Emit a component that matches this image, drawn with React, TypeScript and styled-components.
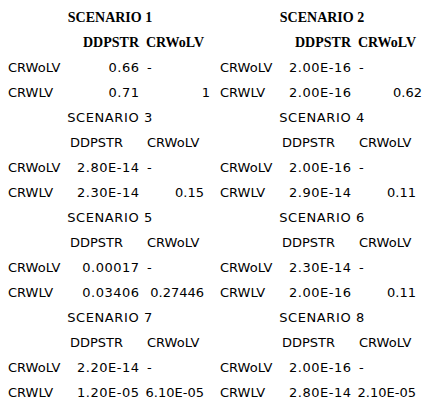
import React from 'react';
import styled, { createGlobalStyle } from 'styled-components';

interface IScenario {
  n: number;
  strong?: boolean;
  rows: [string, string, string][];
}

interface IStrong {
  strong?: boolean;
}

interface IValue {
  col: 'b' | 'c';
  edge?: boolean;
}

const scenarios: IScenario[] = [
  { n: 1, strong: true, rows: [['CRWoLV', '0.66', '-'], ['CRWLV', '0.71', '1']] },
  { n: 2, strong: true, rows: [['CRWoLV', '2.00E-16', '-'], ['CRWLV', '2.00E-16', '0.62']] },
  { n: 3, rows: [['CRWoLV', '2.80E-14', '-'], ['CRWLV', '2.30E-14', '0.15']] },
  { n: 4, rows: [['CRWoLV', '2.00E-16', '-'], ['CRWLV', '2.90E-14', '0.11']] },
  { n: 5, rows: [['CRWoLV', '0.00017', '-'], ['CRWLV', '0.03406', '0.27446']] },
  { n: 6, rows: [['CRWoLV', '2.30E-14', '-'], ['CRWLV', '2.00E-16', '0.11']] },
  { n: 7, rows: [['CRWoLV', '2.20E-14', '-'], ['CRWLV', '1.20E-05', '6.10E-05']] },
  { n: 8, rows: [['CRWoLV', '2.00E-16', '-'], ['CRWLV', '2.80E-14', '2.10E-05']] },
];

const GlobalStyle = createGlobalStyle`
  body {
    margin: 0;
    background: #fff;
    color: #000;
    font-family: 'DejaVu Sans', sans-serif;
    font-size: 13px;
  }
`;

const Page = styled.div`
  display: grid;
  grid-template-columns: 204px 204px;
  column-gap: 8px;
  padding: 5px 0 0 8px;
`;

const Block = styled.div`
  display: grid;
  grid-template-columns: 62px 70px 72px;
  grid-auto-rows: 25px;
  line-height: 25px;
  white-space: nowrap;
`;

const Title = styled.div<IStrong>`
  grid-column: 1 / -1;
  text-align: center;
  ${(p) =>
    p.strong
      ? `font-family: 'Liberation Serif', serif; font-weight: bold; font-size: 14px;`
      : `letter-spacing: 0.6px;`}
`;

const Head = styled.div<IStrong & { col: 'b' | 'c' }>`
  ${(p) =>
    p.strong
      ? `font-family: 'Liberation Serif', serif; font-weight: bold; font-size: 14px;
         text-align: right; padding-right: ${p.col === 'b' ? 1 : 8}px;`
      : `text-align: left; padding-left: ${p.col === 'b' ? 0 : 7}px;`}
`;

const Label = styled.div`
  text-align: left;
`;

const Value = styled.div<IValue>`
  text-align: right;
  letter-spacing: ${(p) => (p.col === 'b' ? 0.5 : 0)}px;
  padding-right: ${(p) => (p.col === 'b' ? 0.5 : p.edge ? 2 : 8)}px;
`;

const Dash = styled.div`
  text-align: left;
  padding-left: 7px;
`;

const Scenario: React.FC<{ s: IScenario }> = ({ s }) => (
  <Block>
    <Title strong={s.strong}>SCENARIO {s.n}</Title>
    <div />
    <Head strong={s.strong} col='b'>DDPSTR</Head>
    <Head strong={s.strong} col='c'>CRWoLV</Head>
    {s.rows.map(([label, b, c]) => (
      <React.Fragment key={label}>
        <Label>{label}</Label>
        <Value col='b'>{b}</Value>
        {c === '-' ? <Dash>-</Dash> : <Value col='c' edge={s.strong}>{c}</Value>}
      </React.Fragment>
    ))}
  </Block>
);

const App: React.FC = () => (
  <>
    <GlobalStyle />
    <Page>
      {scenarios.map((s) => (
        <Scenario key={s.n} s={s} />
      ))}
    </Page>
  </>
);

export default App;
